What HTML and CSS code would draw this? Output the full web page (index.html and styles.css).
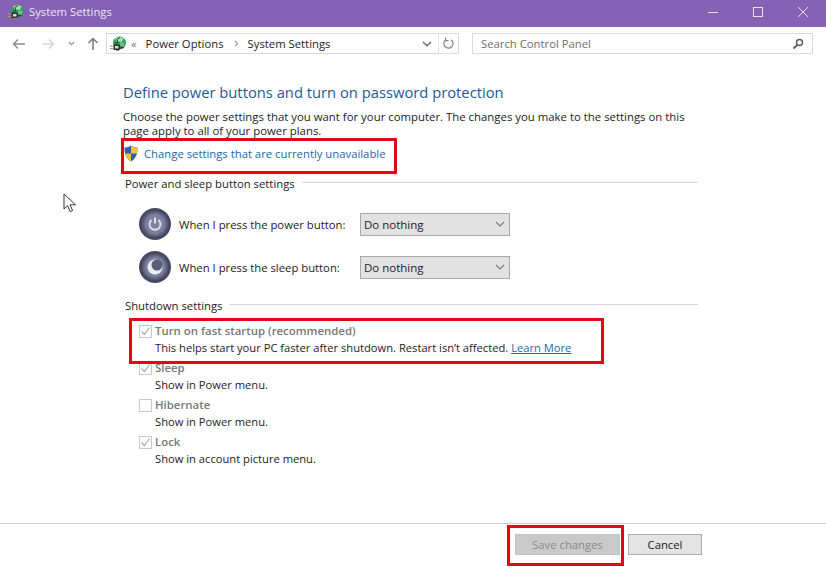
FILE: index.html
```html
<!DOCTYPE html>
<html lang="en">
<head>
<meta charset="utf-8">
<title>System Settings</title>
<link rel="stylesheet" href="styles.css">
</head>
<body>
<svg width="0" height="0" class="defs">
  <symbol id="plug" viewBox="0 0 16 16">
    <circle cx="9.500" cy="7" r="6.500" fill="#2f9c58"/>
    <path d="M5 2.500C7 .8 11 .6 13.500 2.500L12 6 6.500 5.500z" fill="#9fe2ab"/>
    <path d="M10 6.500h4.500c.3 2-.8 4.500-3 5.500H10z" fill="#62c47f"/>
    <path d="M10 1.500 6.800 3.500 8 6.500 5 7.500" fill="none" stroke="#1f2a24" stroke-width=".9"/>
    <path d="M3.500 8.500h5.500l1.500 1.500v2.500L9 14H3.500z" fill="#2a2d30"/>
    <path d="M5 10h3.500v2.500H5z" fill="#d9dcd8"/>
    <path d="M0 10h3.500M0 12.500h3.500" stroke="#b09a3c" stroke-width="1.200"/>
    <path d="M10.500 11.500h3" stroke="#2a2d30" stroke-width="1.300"/>
    <path d="M6 14.500h3" stroke="#8a8d90" stroke-width="1"/>
  </symbol>
</svg>
<header class="titlebar">
  <svg class="title-icon" width="16" height="16"><use href="#plug"/></svg>
  <span class="title-text">System Settings</span>
  <div class="win-controls">
    <svg width="12" height="12" viewBox="0 0 12 12"><path d="M1 6.500h10" stroke="#e8e0f2" stroke-width="1"/></svg>
    <svg width="12" height="12" viewBox="0 0 12 12"><rect x="1.500" y="1.500" width="9" height="9" fill="none" stroke="#e8e0f2"/></svg>
    <svg width="12" height="12" viewBox="0 0 12 12"><path d="M1 1l10 10M11 1 1 11" stroke="#e8e0f2" stroke-width="1"/></svg>
  </div>
</header>
<nav class="toolbar">
  <div class="nav-buttons">
    <svg class="nav-back" width="14" height="12" viewBox="0 0 14 12"><path d="M13 6H1.500M6 1.500 1.500 6 6 10.500" fill="none" stroke="#8a8a8a" stroke-width="1.500"/></svg>
    <svg class="nav-forward" width="14" height="12" viewBox="0 0 14 12"><path d="M1 6h11.500M8 1.500 12.500 6 8 10.500" fill="none" stroke="#d6d6d6" stroke-width="1.500"/></svg>
    <svg class="nav-drop" width="7" height="5" viewBox="0 0 7 5"><path d="M.8 1 3.500 3.600 6.200 1" fill="none" stroke="#9a9a9a" stroke-width="1.300"/></svg>
    <svg class="nav-up" width="12" height="14" viewBox="0 0 12 14"><path d="M6 13V1.500M1.500 6 6 1.500 10.500 6" fill="none" stroke="#7a7a7a" stroke-width="1.500"/></svg>
  </div>
  <div class="address">
    <svg class="addr-icon" width="16" height="16"><use href="#plug"/></svg>
    <span class="crumb-more">&laquo;</span>
    <span class="crumb">Power Options</span>
    <svg class="crumb-sep" width="5" height="7" viewBox="0 0 5 7"><path d="M1 .8 3.600 3.500 1 6.200" fill="none" stroke="#999" stroke-width="1.200"/></svg>
    <span class="crumb">System Settings</span>
    <svg class="addr-drop" width="10" height="6" viewBox="0 0 10 6"><path d="M1 1l4 3.800L9 1" fill="none" stroke="#666" stroke-width="1.500"/></svg>
    <span class="addr-refresh">
      <svg width="12" height="13" viewBox="0 0 12 13"><path d="M3.200 2.600A4.600 4.600 0 1 0 8 2.800M2.500 .6v3h3" fill="none" stroke="#858585" stroke-width="1.200"/></svg>
    </span>
  </div>
  <div class="search">
    <span>Search Control Panel</span>
    <svg width="12" height="12" viewBox="0 0 12 12"><circle cx="7.500" cy="4.500" r="3" fill="none" stroke="#555" stroke-width="1.400"/><path d="M5.200 6.800 1.500 10.500" stroke="#555" stroke-width="1.800"/></svg>
  </div>
</nav>
<main class="content">
  <h1 class="heading">Define power buttons and turn on password protection</h1>
  <p class="intro">Choose the power settings that you want for your computer. The changes you make to the settings on this page apply to all of your power plans.</p>
  <div class="change-link">
    <svg width="16" height="17" viewBox="0 0 16 17">
      <path d="M8 .5C6 2 3.500 2.500 1.500 2.500c0 6 1 10.500 6.500 14 5.500-3.500 6.500-8 6.500-14C12.500 2.500 10 2 8 .5z" fill="#2f5fa8"/>
      <path d="M8 .5C10 2 12.500 2.500 14.500 2.500c0 2.500-.1 4.500-.6 6H8zM8 8.500v8C4.800 14.500 3 12 2.200 8.500z" fill="#f4c430"/>
    </svg>
    <a class="link" href="#">Change settings that are currently unavailable</a>
  </div>
  <div class="section-title first"><span>Power and sleep button settings</span></div>
  <div class="power-rows">
    <div class="power-row">
      <span class="orb">
        <svg width="16" height="16" viewBox="0 0 16 16"><path d="M4.600 4a5.500 5.500 0 1 0 6.800 0M8 1.500v6" fill="none" stroke="#dfe0e8" stroke-width="2"/></svg>
      </span>
      <span class="power-label">When I press the power button:</span>
      <div class="select">Do nothing<svg width="10" height="6" viewBox="0 0 10 6"><path d="M.8.8 5 5 9.200.8" fill="none" stroke="#777" stroke-width="1.100"/></svg></div>
    </div>
    <div class="power-row">
      <span class="orb">
        <svg width="18" height="18" viewBox="0 0 18 18"><circle cx="9" cy="9" r="7.500" fill="#eceDf2"/><circle cx="11" cy="7" r="5.500" fill="#5b5e7a"/></svg>
      </span>
      <span class="power-label">When I press the sleep button:</span>
      <div class="select">Do nothing<svg width="10" height="6" viewBox="0 0 10 6"><path d="M.8.8 5 5 9.200.8" fill="none" stroke="#777" stroke-width="1.100"/></svg></div>
    </div>
  </div>
  <div class="section-title second"><span>Shutdown settings</span></div>
  <div class="options">
    <div class="option">
      <span class="checkbox"><svg width="11" height="11" viewBox="0 0 11 11"><path d="M1.500 5.500 4.500 8.500 9.500 1.500" fill="none" stroke="#a8a8a8" stroke-width="1.200"/></svg></span>
      <div class="option-text"><div class="option-name">Turn on fast startup (recommended)</div>
      <div class="option-desc">This helps start your PC faster after shutdown. Restart isn’t affected. <a class="link underline" href="#">Learn More</a></div></div>
    </div>
    <div class="option">
      <span class="checkbox"><svg width="11" height="11" viewBox="0 0 11 11"><path d="M1.500 5.500 4.500 8.500 9.500 1.500" fill="none" stroke="#a8a8a8" stroke-width="1.200"/></svg></span>
      <div class="option-text"><div class="option-name">Sleep</div><div class="option-desc">Show in Power menu.</div></div>
    </div>
    <div class="option">
      <span class="checkbox"></span>
      <div class="option-text"><div class="option-name">Hibernate</div><div class="option-desc">Show in Power menu.</div></div>
    </div>
    <div class="option">
      <span class="checkbox"><svg width="11" height="11" viewBox="0 0 11 11"><path d="M1.500 5.500 4.500 8.500 9.500 1.500" fill="none" stroke="#a8a8a8" stroke-width="1.200"/></svg></span>
      <div class="option-text"><div class="option-name">Lock</div><div class="option-desc">Show in account picture menu.</div></div>
    </div>
  </div>
</main>
<footer class="footer">
  <button class="btn btn-disabled" type="button">Save changes</button>
  <button class="btn" type="button">Cancel</button>
</footer>
<div class="cursor">
  <svg width="14" height="21" viewBox="0 0 14 21"><path d="M1 1v15l3.600-3.400 2.600 6 2.400-1-2.600-5.800H12.500z" fill="#fff" stroke="#333" stroke-width="1"/></svg>
</div>
<div class="mark mark-link"></div>
<div class="mark mark-startup"></div>
<div class="mark mark-save"></div>
</body>
</html>
```
FILE: styles.css
```css
* { box-sizing: border-box; }
html, body { margin: 0; padding: 0; }
body {
  position: relative;
  width: 826px;
  height: 566px;
  overflow: hidden;
  background: #fff;
  color: #1a1a1a;
  font-family: "Open Sans", "Noto Sans", sans-serif;
  font-size: 11.3px;
}
.defs { position: absolute; }
.titlebar {
  height: 27px;
  background: #8562b4;
  display: flex;
  align-items: center;
  padding-left: 8px;
  color: #ece6f4;
}
.title-icon { flex: none; margin-top: -3px; }
.title-text { margin-left: 5px; font-size: 11.3px; margin-top: -4px; }
.win-controls {
  margin-left: auto;
  display: flex;
  gap: 33px;
  padding-right: 17px;
  margin-top: -4px;
}
.toolbar {
  height: 33px;
  display: flex;
  align-items: center;
}
.nav-buttons { width: 106px; flex: none; display: flex; align-items: center; padding-left: 12px; }
.nav-forward { margin-left: 15px; }
.nav-drop { margin-left: 13px; }
.nav-up { margin-left: 12px; }
.address {
  width: 353px;
  height: 21px;
  border: 1px solid #d9d9d9;
  display: flex;
  align-items: center;
  padding-left: 3px;
  color: #222;
}
.crumb-more { margin: 0 9px 0 5px; color: #777; }
.crumb-sep { margin: 0 9px 0 10px; }
.addr-drop { margin-left: auto; margin-right: 6px; }
.addr-refresh {
  width: 20px;
  height: 19px;
  border-left: 1px solid #e3e3e3;
  display: flex;
  align-items: center;
  justify-content: center;
}
.search {
  width: 341px;
  height: 21px;
  margin-left: 13px;
  border: 1px solid #d9d9d9;
  display: flex;
  align-items: center;
  justify-content: space-between;
  padding: 0 8px 0 8px;
  color: #6d6d6d;
}
.content { padding: 24px 0 0 123px; width: 698px; height: 463px; }
.heading {
  margin: 0;
  font-size: 14.75px;
  line-height: 16px;
  font-weight: 400;
  color: #1c5a96;
  white-space: nowrap;
}
.intro { margin: 10px 0 0; width: 575px; line-height: 14px; color: #222; font-size: 11.38px; }
.change-link { display: flex; align-items: center; height: 18px; margin-top: 6px; gap: 5px; }
.link { color: #1a6aa8; text-decoration: none; }
.underline { text-decoration: underline; }
.section-title { display: flex; align-items: center; padding-left: 2px; height: 16px; color: #222; }
.section-title::after { content: ""; flex: 1; height: 1px; background: #d5d5d5; margin-left: 7px; margin-top: -2px; }
.first { margin-top: 13px; }
.second { margin-top: 14px; }
.power-rows { margin-top: 17px; padding-left: 16px; display: flex; flex-direction: column; gap: 11px; }
.power-row { display: flex; align-items: center; height: 32px; }
.orb {
  flex: none;
  width: 32px;
  height: 32px;
  border-radius: 50%;
  background: radial-gradient(circle at 50% 50%, #7d80a0 0 40%, #43455f 62%, #55576f 78%, #c3c4d0 100%);
  display: flex;
  align-items: center;
  justify-content: center;
}
.power-label { margin-left: 8px; width: 181px; white-space: nowrap; }
.select {
  width: 150px;
  height: 23px;
  border: 1px solid #a8a8a8;
  background: #e2e2e2;
  display: flex;
  align-items: center;
  justify-content: space-between;
  padding: 0 4px 0 3px;
  font-size: 11.5px;
}
.options { margin-top: 10px; padding-left: 16px; display: flex; flex-direction: column; gap: 5px; }
.option { display: flex; align-items: flex-start; }
.checkbox {
  flex: none;
  width: 13px;
  height: 13px;
  margin-top: 2px;
  border: 1px solid #c9c9c9;
  display: flex;
  align-items: center;
  justify-content: center;
  background: #fff;
}
.option-text { margin-left: 3px; }
.option-name { font-weight: 600; color: #777; line-height: 16px; font-size: 11.4px; }
.option-desc { line-height: 15px; margin-top: 1px; white-space: nowrap; color: #222; font-size: 11.18px; }
.footer {
  border-top: 1px solid #d0d0d0;
  height: 43px;
  display: flex;
  align-items: flex-start;
  gap: 8px;
  padding: 10px 0 0 515px;
}
.btn {
  height: 21px;
  width: 74px;
  padding: 0;
  border: 1px solid #adadad;
  background: #e3e3e3;
  color: #1a1a1a;
  font: inherit;
}
.btn-disabled { width: 105px; background: #c9c9c9; border-color: #c4c4c4; color: #8a8a8a; }
.cursor { position: absolute; left: 63px; top: 193px; line-height: 0; }
.mark { position: absolute; border: 3px solid #e30613; pointer-events: none; }
.mark-link { left: 121px; top: 138px; width: 276px; height: 36px; }
.mark-startup { left: 129px; top: 318px; width: 475px; height: 46px; }
.mark-save { left: 507px; top: 525px; width: 117px; height: 41px; }
```
